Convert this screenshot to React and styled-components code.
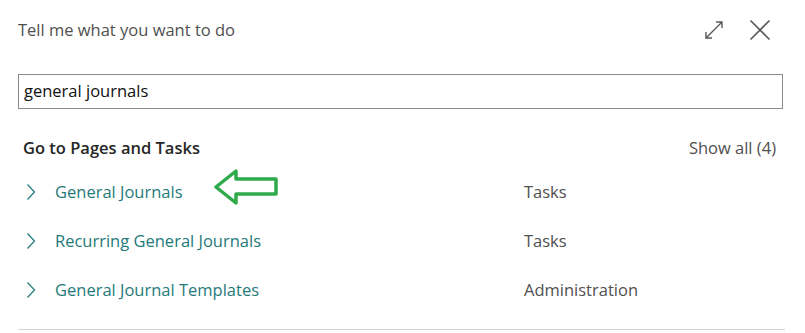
import React from "react";
import styled, { createGlobalStyle } from "styled-components";

const Global = createGlobalStyle`
  html, body { margin: 0; padding: 0; background: #ffffff; }
  body { font-family: "Open Sans", "Noto Sans", sans-serif; }
  * { box-sizing: border-box; }
`;

const Panel = styled.div`
  width: 805px;
  height: 333px;
  padding: 0 22px 0 18px;
  background: #ffffff;
  display: flex;
  flex-direction: column;
`;

const Header = styled.div`
  height: 59px;
  display: flex;
  align-items: center;
  justify-content: space-between;
`;

const Title = styled.div`
  font-size: 16.5px;
  color: #505050;
`;

const HeaderActions = styled.div`
  display: flex;
  align-items: center;
  gap: 24px;
  padding-right: 12px;
`;

const IconButton = styled.button`
  border: none;
  background: none;
  padding: 0;
  width: 22px;
  height: 22px;
  display: flex;
  align-items: center;
  justify-content: center;
  cursor: pointer;
`;

const SearchInput = styled.input`
  margin-top: 15px;
  height: 35px;
  width: 100%;
  border: 1px solid #8a8a8a;
  padding: 0 6px 2px 5px;
  font-family: inherit;
  font-size: 16.5px;
  color: #111;
  outline: none;
`;

const SectionHeader = styled.div`
  margin-top: 18px;
  height: 40px;
  display: flex;
  align-items: center;
  justify-content: space-between;
  padding: 0 7px 0 5px;
`;

const SectionTitle = styled.div`
  font-size: 16.5px;
  font-weight: 600;
  color: #262626;
`;

const ShowAll = styled.a`
  font-size: 16.5px;
  color: #505050;
  cursor: pointer;
`;

const List = styled.div`
  display: flex;
  flex-direction: column;
`;

const Row = styled.div`
  position: relative;
  height: 49px;
  display: grid;
  grid-template-columns: 37px 469px 1fr;
  align-items: center;
`;

const Chevron = styled.span`
  padding-left: 8px;
  display: flex;
  align-items: center;
`;

const Link = styled.a`
  font-size: 16.5px;
  color: #1f7a7a;
  cursor: pointer;
`;

const Category = styled.span`
  font-size: 16.5px;
  color: #505050;
`;

const Annotation = styled.svg`
  position: absolute;
  left: 196px;
  top: 2px;
`;

const Divider = styled.div`
  margin-top: 15px;
  height: 1px;
  background: #d4d4d4;
  margin-right: -2px;
`;

const ChevronIcon = () => (
  <svg width="10" height="18" viewBox="0 0 10 18">
    <path d="M1.5 1.5 L8.5 9 L1.5 16.5" fill="none" stroke="#2a7f7f" strokeWidth="1.3" />
  </svg>
);

const items = [
  { name: "General Journals", cat: "Tasks", marked: true },
  { name: "Recurring General Journals", cat: "Tasks" },
  { name: "General Journal Templates", cat: "Administration" },
];

export default function App() {
  return (
    <>
      <Global />
      <Panel>
        <Header>
          <Title>Tell me what you want to do</Title>
          <HeaderActions>
            <IconButton aria-label="Expand">
              <svg width="22" height="22" viewBox="0 0 22 22">
                <path d="M3 19 L19 3 M13 3 H19 V9 M3 13 V19 H9" fill="none" stroke="#5a5a5a" strokeWidth="1.4" />
              </svg>
            </IconButton>
            <IconButton aria-label="Close">
              <svg width="22" height="22" viewBox="0 0 22 22">
                <path d="M1.5 1.5 L20.5 20.5 M20.5 1.5 L1.5 20.5" fill="none" stroke="#5a5a5a" strokeWidth="1.6" />
              </svg>
            </IconButton>
          </HeaderActions>
        </Header>
        <SearchInput defaultValue="general journals" />
        <SectionHeader>
          <SectionTitle>Go to Pages and Tasks</SectionTitle>
          <ShowAll>Show all (4)</ShowAll>
        </SectionHeader>
        <List>
          {items.map((it) => (
            <Row key={it.name}>
              <Chevron>
                <ChevronIcon />
              </Chevron>
              <Link>{it.name}</Link>
              <Category>{it.cat}</Category>
              {it.marked && (
                <Annotation width="70" height="40" viewBox="0 0 70 40">
                  <path
                    d="M22 2 L22 10 L62 10 L62 25 L22 25 L22 34 L2 18 Z"
                    fill="none"
                    stroke="#2eaa4a"
                    strokeWidth="3.5"
                    strokeLinejoin="round"
                  />
                </Annotation>
              )}
            </Row>
          ))}
        </List>
        <Divider />
      </Panel>
    </>
  );
}
